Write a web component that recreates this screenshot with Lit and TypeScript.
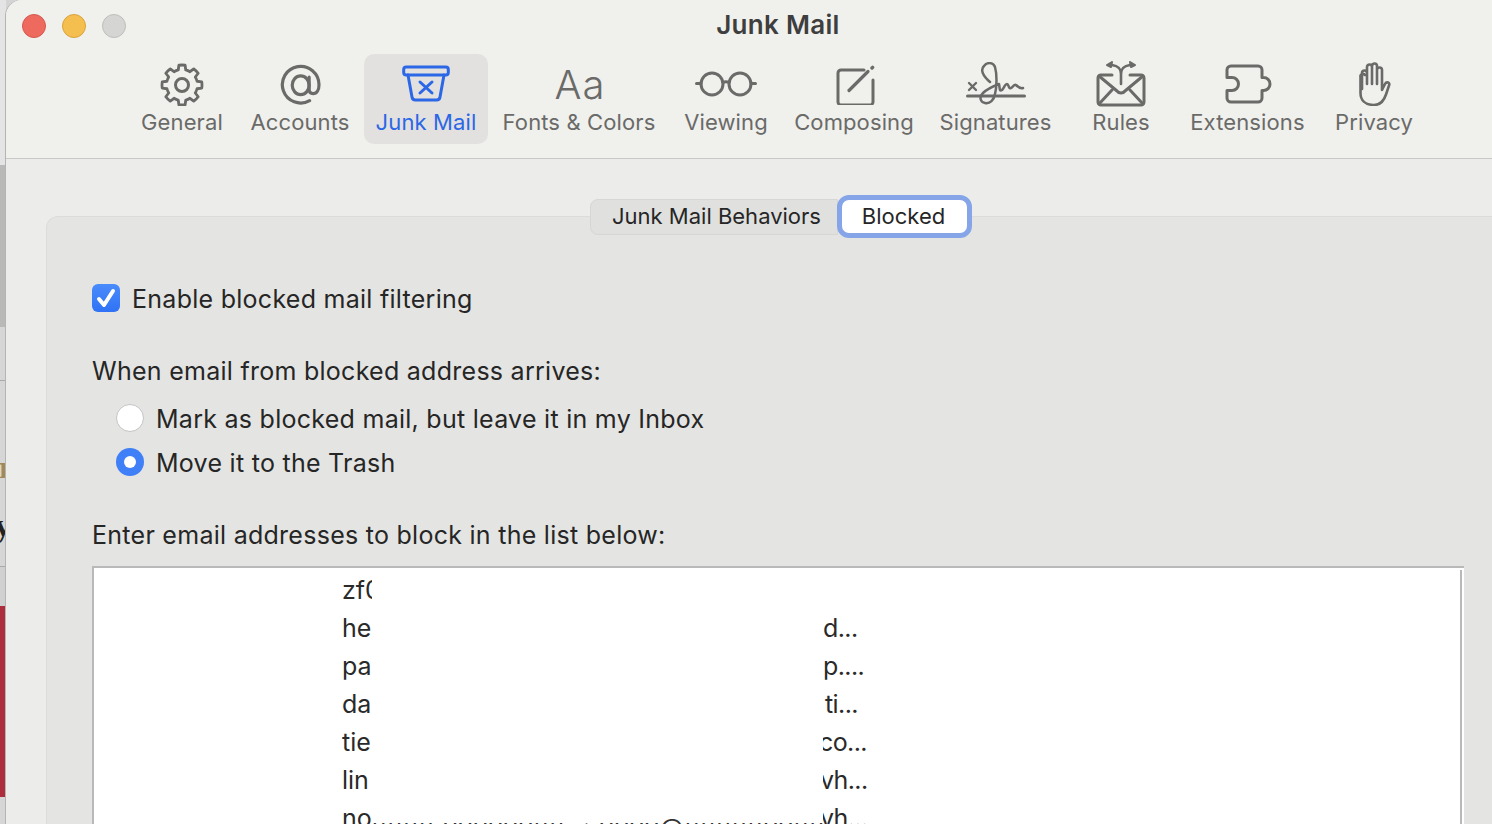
import { LitElement, html, css, svg } from "lit";
import { customElement } from "lit/decorators.js";

const ic = (w: number, h: number, body: unknown) => html`<svg width=${w} height=${h} viewBox="0 0 ${w} ${h}" fill="none" stroke="currentColor" stroke-width="3" stroke-linecap="round" stroke-linejoin="round">${body}</svg>`;

function gearPath(cx: number, cy: number, rIn: number, rOut: number): string {
  const pt = (deg: number, r: number) => {
    const a = (deg * Math.PI) / 180;
    return `${(cx + r * Math.cos(a)).toFixed(2)} ${(cy + r * Math.sin(a)).toFixed(2)}`;
  };
  let d = "";
  for (let i = 0; i < 8; i++) {
    const t = -90 + i * 45;
    d += `${i === 0 ? "M" : "A" + rIn + " " + rIn + " 0 0 1 "}${pt(t - 14, rIn)}`;
    d += `L${pt(t - 9, rOut)}A${rOut} ${rOut} 0 0 1 ${pt(t + 9, rOut)}L${pt(t + 14, rIn)}`;
  }
  return d + `A${rIn} ${rIn} 0 0 1 ${pt(-104, rIn)}Z`;
}

const gear = ic(44, 44, svg`
  <circle cx="22" cy="23" r="6.500"/>
  <path d=${gearPath(22, 23, 15.5, 20)} stroke-width="2.800"/>`);
const at = ic(44, 44, svg`
  <g transform="translate(2 3) scale(.94)">
  <path d="M31.500 38a19.500 19.500 0 1 1 10-17c0 5.500-2.400 9.400-6.200 9.400-2.900 0-4.300-2-4.300-4.600V13" stroke-width="3.400"/>
  <ellipse cx="22" cy="21.500" rx="9" ry="10" stroke-width="3.400"/></g>`);
const junk = ic(48, 38, svg`
  <rect x="1.700" y="2" width="44.600" height="8" rx="2.500"/>
  <path d="M6 10l4 22a3.500 3.500 0 0 0 3.500 3h21a3.500 3.500 0 0 0 3.500-3l4-22"/>
  <path d="M18 17l12 11M30 17L18 28"/>`);
const glasses = ic(62, 26, svg`
  <circle cx="17" cy="13" r="11"/><circle cx="45" cy="13" r="11"/>
  <path d="M28 11.500q3-1.500 6 0M1.500 12.500h4.500M56 12.500h4.500"/>`);
const compose = ic(42, 42, svg`
  <g transform="translate(3 2)">
  <path d="M28 5H5a3 3 0 0 0-3 3v29a3 3 0 0 0 3 3h29a3 3 0 0 0 3-3V15"/>
  <path d="M13 25.500L32 6.500" stroke-width="3.200"/>
  <path d="M36 3l.6-.6" stroke-width="3.400"/></g>`);
const sign = ic(60, 44, svg`
  <path d="M1.500 34h57" stroke-width="3"/>
  <path d="M3 21l7 7M10 21l-7 7" stroke-width="2.400"/>
  <path d="M24 20C17 14 14 8 18 4C21 0 27 0 29 5C31 12 31 24 29 32C28 38 24 42 19 41C14 40 13 35 17 31C21 27 28 24 33 22C34 26 33 30 36 28C38 26 39 22 41 22C43 22 42 27 45 26C47 25 48 22 50 23C52 25 54 27 57 26" stroke-width="2.500"/>`);
const rules = ic(50, 46, svg`
  <path d="M16 14H5a3 3 0 0 0-3 3v24a3 3 0 0 0 3 3h40a3 3 0 0 0 3-3V17a3 3 0 0 0-3-3H34"/>
  <path d="M3 15l18 15a5 5 0 0 0 8 0l18-15M3 43l13-14M47 43L34 29"/>
  <path d="M25 23V13c0-5-2-8-9-9M25 13c0-5 2-8 9-9" stroke-width="2.600"/>
  <path d="M11 4l5-3-1 5zM39 4l-5-3 1 5z" fill="currentColor" stroke-width="2"/>`);
const puzzle = ic(50, 40, svg`
  <path d="M8 2h27a4 4 0 0 1 4 4v7.500h1.500a6.500 6.500 0 0 1 0 13H39V34a4 4 0 0 1-4 4H8a4 4 0 0 1-4-4v-7.500h5a6.500 6.500 0 0 0 0-13H4V6a4 4 0 0 1 4-4z"/>`);
const hand = ic(36, 44, svg`
  <g transform="translate(-1 0)">
  <path d="M7 27V11a2.500 2.500 0 0 1 5 0v11V5a2.500 2.500 0 0 1 5 0v17V4a2.500 2.500 0 0 1 5 0v18V8a2.500 2.500 0 0 1 5 0v20l3-6c1.500-3 5.500-1.500 4 1.500l-3 9c-2 6-6 10.500-12 10.500-9 0-13.500-5-13.500-12V15a2.500 2.500 0 0 1 4.500-2" stroke-width="2.600"/></g>`);

const tools: { label: string; icon: unknown; w: number; active?: boolean; glyph?: boolean }[] = [
  { label: "General", icon: gear, w: 118 },
  { label: "Accounts", icon: at, w: 118 },
  { label: "Junk Mail", icon: junk, w: 124, active: true },
  { label: "Fonts & Colors", icon: null, w: 182, glyph: true },
  { label: "Viewing", icon: glasses, w: 112 },
  { label: "Composing", icon: compose, w: 144 },
  { label: "Signatures", icon: sign, w: 139 },
  { label: "Rules", icon: rules, w: 112 },
  { label: "Extensions", icon: puzzle, w: 141 },
  { label: "Privacy", icon: hand, w: 112 },
];

const rows: [string, string, number][] = [
  ["zf0", "", 0], ["he", "d...", 0], ["pa", "p....", 0], ["da", "ti...", 2], ["tie", "co...", -4], ["lin", "vh...", -3], ["no", "vh...", -3],
];

@customElement("app-root")
export class AppRoot extends LitElement {
  static styles = css`
    :host { display: block; width: 1492px; height: 824px; overflow: hidden; font-family: Inter, "Liberation Sans", sans-serif; color: #262626; }
    .screen { display: flex; height: 824px; background: #d4d4d4; }
    .behind { width: 6px; flex: none; display: flex; flex-direction: column; overflow: hidden; font-family: "Liberation Serif", serif; }
    .b1 { height: 165px; background: #e4e4e4; }
    .b2 { height: 162px; background: #b9b9b8; }
    .b3 { height: 53px; background: #d6d6d6; border-bottom: 1px solid #aaa; }
    .b4 { height: 186px; background: #d6d6d6; border-bottom: 1px solid #aaa; display: flex; flex-direction: column; align-items: flex-end; padding-top: 72px; box-sizing: border-box; line-height: 28px; font-size: 32px; font-weight: 700; }
    .tan { color: #a08a5a; height: 58px; margin-right: -7px; }
    .ink { color: #222; margin-right: -5px; }
    .b5 { height: 39px; background: #d0d0d0; }
    .b6 { height: 191px; background: #ad2d3d; }
    .b7 { flex: 1; background: #d6d6d6; }
    .win { flex: 1; min-width: 0; display: flex; flex-direction: column; background: #ecedeb; border-top-left-radius: 16px; box-shadow: -1px 0 0 #b4b4b4; overflow: hidden; }
    .head { height: 159px; flex: none; box-sizing: border-box; background: #f0f0ed; border-bottom: 1px solid #c8c8c6; display: flex; flex-direction: column; position: relative; }
    .lights { position: absolute; left: 16px; top: 14px; display: flex; gap: 16px; }
    .light { width: 24px; height: 24px; border-radius: 50%; box-sizing: border-box; border: 1px solid; }
    .red { background: #ee6a5f; border-color: #d5574d; }
    .yellow { background: #f5bf4f; border-color: #d9a23b; }
    .gray { background: #d5d5d3; border-color: #bdbdbb; }
    .title { height: 54px; flex: none; text-align: center; font-size: 26px; font-weight: 600; letter-spacing: 0.3px; line-height: 50px; color: #3e3e3e; padding-left: 58px; box-sizing: border-box; }
    .tools { display: flex; padding-left: 117px; }
    .tool { display: flex; flex-direction: column; align-items: center; height: 90px; flex: none; color: #6a6a68; font-size: 22px; line-height: 26px; letter-spacing: 0.12px; border-radius: 10px; }
    .tool.active { color: #2b67e6; background: #e2e1df; margin-left: 5px; }
    .ico { height: 48px; margin-top: 6px; display: flex; align-items: center; justify-content: center; flex: none; }
    .aa { font-size: 40px; font-weight: 300; letter-spacing: 1px; line-height: 44px; margin: 1px 0 0 2px; }
    .lab { white-space: nowrap; margin-top: 1px; }
    .body { flex: 1; min-height: 0; padding: 57px 0 0 40px; box-sizing: border-box; }
    .panel { position: relative; height: 700px; box-sizing: border-box; background: #e4e4e2; border: 1px solid #dcdcda; border-right: none; border-top-left-radius: 12px; padding: 64px 28px 0 45px; font-size: 25px; letter-spacing: 0.27px; }
    .seg { position: absolute; left: 543px; top: -18px; display: flex; height: 36px; font-size: 22px; letter-spacing: 0; }
    .seg-a { width: 248px; height: 36px; box-sizing: border-box; background: #e0e0de; border: 1px solid #d6d6d4; border-radius: 8px 0 0 8px; line-height: 33px; padding-left: 21px; }
    .seg-b { width: 135px; height: 43px; margin: -4px 0 0 -1px; box-sizing: border-box; background: #fff; border: 5px solid #86a5e8; border-radius: 12px; line-height: 32px; text-align: center; padding-right: 2px; }
    .line { display: flex; align-items: center; height: 36px; line-height: 36px; white-space: nowrap; }
    .check { width: 28px; height: 28px; border-radius: 6px; background: linear-gradient(#4a8cfb, #2f72f5); margin: -2px 12px 0 0; display: flex; align-items: center; justify-content: center; flex: none; }
    .prompt { margin-top: 36px; }
    .radios { display: flex; flex-direction: column; gap: 8px; margin-top: 12px; padding-left: 24px; }
    .radio { width: 28px; height: 28px; border-radius: 50%; box-sizing: border-box; background: #fff; border: 1px solid #c4c4c4; margin: -2px 12px 0 0; flex: none; }
    .radio.on { background: #3f7ff7; border: none; display: flex; align-items: center; justify-content: center; }
    .dot { width: 12px; height: 12px; background: #fff; border-radius: 50%; }
    .enter { margin-top: 36px; }
    .list { margin-top: 13px; height: 300px; box-sizing: border-box; background: #fff; border-top: 2px solid #b9b9b9; border-left: 2px solid #b9b9b9; padding: 3px 4px 0 0; position: relative; letter-spacing: 0; }
    .list::after { content: ""; position: absolute; right: 2px; top: 2px; bottom: 0; width: 2px; background: #b9b9b9; }
    .row { display: flex; height: 38px; line-height: 38px; padding-left: 248px; font-size: 25px; color: #2a2a2a; }
    .l { width: 30px; overflow: hidden; flex: none; white-space: nowrap; }
    .mid { width: 451px; flex: none; overflow: hidden; }
    .r { white-space: nowrap; width: 60px; overflow: hidden; letter-spacing: -0.6px; }
    .r span { display: block; }
    .garble { font-size: 24px; line-height: 38px; letter-spacing: 1.600px; white-space: nowrap; padding-top: 10px; color: #333; }
  `;

  render() {
    return html`<div class="screen">
      <div class="behind">
        <div class="b1"></div><div class="b2"></div><div class="b3"></div>
        <div class="b4"><span class="tan">r</span><span class="ink">y</span></div>
        <div class="b5"></div><div class="b6"></div><div class="b7"></div>
      </div>
      <div class="win">
        <div class="head">
          <div class="lights"><div class="light red"></div><div class="light yellow"></div><div class="light gray"></div></div>
          <div class="title">Junk Mail</div>
          <div class="tools">
            ${tools.map(t => html`<div class="tool ${t.active ? "active" : ""}" style="width:${t.w}px">
              <div class="ico">${t.glyph ? html`<span class="aa">Aa</span>` : t.icon}</div>
              <div class="lab">${t.label}</div>
            </div>`)}
          </div>
        </div>
        <div class="body">
          <div class="panel">
            <div class="seg"><div class="seg-a">Junk Mail Behaviors</div><div class="seg-b">Blocked</div></div>
            <div class="line"><span class="check"><svg width="22" height="20" viewBox="0 0 22 20" fill="none" stroke="#fff" stroke-width="4" stroke-linecap="round" stroke-linejoin="round"><path d="M4 11l5 6L18 3"/></svg></span>Enable blocked mail filtering</div>
            <div class="line prompt">When email from blocked address arrives:</div>
            <div class="radios">
              <div class="line"><span class="radio"></span>Mark as blocked mail, but leave it in my Inbox</div>
              <div class="line"><span class="radio on"><span class="dot"></span></span>Move it to the Trash</div>
            </div>
            <div class="line enter">Enter email addresses to block in the list below:</div>
            <div class="list">
              ${rows.map((r, i) => html`<div class="row"><div class="l">${r[0]}</div><div class="mid">${i === 6 ? html`<div class="garble">uuuu vvvvvvuu &lt; vvvv@uuuuuvvuuvuuuv</div>` : ""}</div><div class="r"><span style="margin-left:${r[2]}px">${r[1]}</span></div></div>`)}
            </div>
          </div>
        </div>
      </div>
    </div>`;
  }
}
